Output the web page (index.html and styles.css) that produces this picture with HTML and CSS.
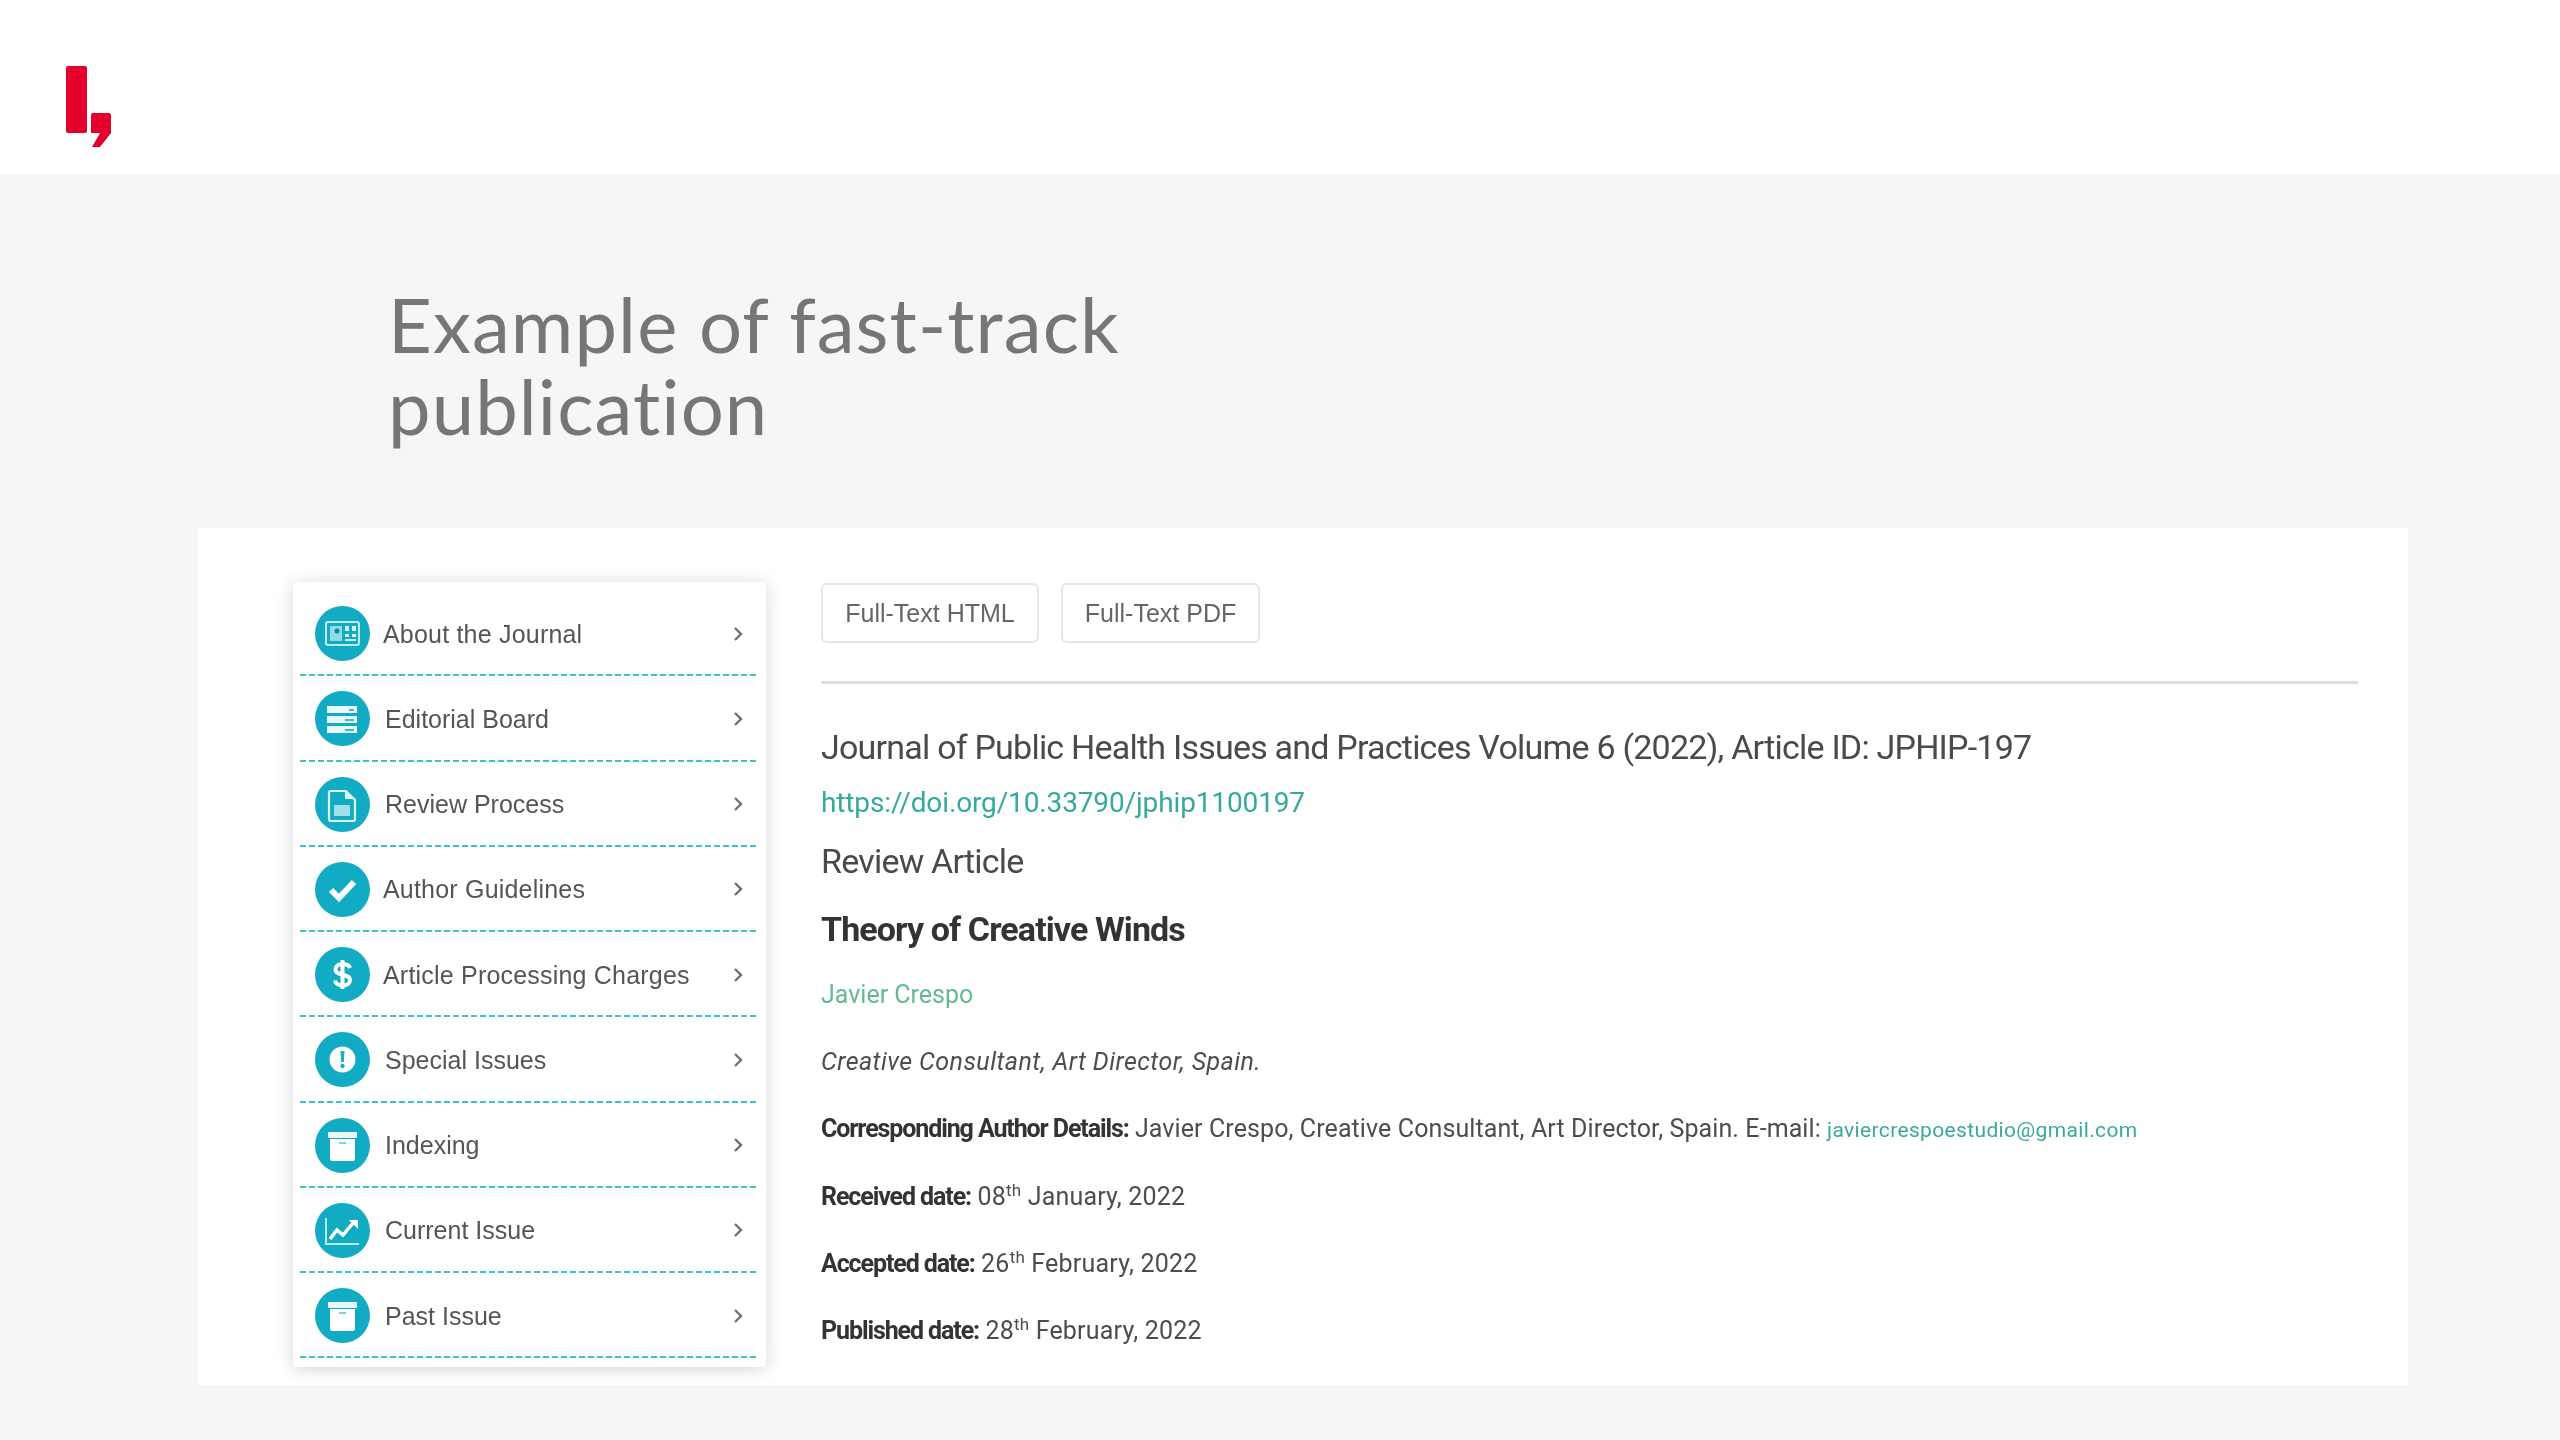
FILE: index.html
```html
<!DOCTYPE html>
<html lang="en">
<head>
<meta charset="utf-8">
<title>Example of fast-track publication</title>
<link rel="stylesheet" href="styles.css">
</head>
<body>
<header class="top">
  <svg class="logo" width="46" height="82" viewBox="0 0 46 82" aria-label="Logo">
    <rect x="0" y="0" width="21" height="67" rx="2" fill="#e4002b"/>
    <path d="M25 49q0-2 2-2h16q2 0 2 2v18L34 81h-8l8-14h-9z" fill="#e4002b"/>
  </svg>
</header>
<main class="page">
  <h1 class="title">Example of fast-track<br>publication</h1>
  <section class="card">
    <nav class="side">
      <a class="row"><span class="ico"><svg viewBox="0 0 55 55"><rect x="11" y="16" width="33" height="23" rx="2" fill="none" stroke="#bfeaf0" stroke-width="2"/><path d="M15 20h12v15H15z" fill="#8fdbe6"/><circle cx="22" cy="25" r="2.500" fill="#0c8aa0"/><path d="M30 20h4v5h-4zM37 20h4v5h-4zM30 28h4v3h-4zM37 28h4v3h-4zM30 33h11v2H30z" fill="#d6f3f7"/></svg></span><span class="lbl lbl-a">About the Journal</span><svg class="chev" viewBox="0 0 10 14"><path d="M2 1l6 6-6 6" fill="none" stroke="#707070" stroke-width="2.400"/></svg></a>
      <a class="row"><span class="ico"><svg viewBox="0 0 55 55"><path d="M12 15h30v7H12zM12 25h30v7H12zM12 35h30v7H12z" fill="#e8f8fa"/><path d="M34 18h5v2h-5zM30 28h9v2h-9zM30 38h9v2h-9z" fill="#38bccf"/></svg></span><span class="lbl">Editorial Board</span><svg class="chev" viewBox="0 0 10 14"><path d="M2 1l6 6-6 6" fill="none" stroke="#707070" stroke-width="2.400"/></svg></a>
      <a class="row"><span class="ico"><svg viewBox="0 0 55 55"><path d="M16 14h15l9 9v19a2 2 0 0 1-2 2H16a2 2 0 0 1-2-2V16a2 2 0 0 1 2-2z" fill="none" stroke="#dff6f9" stroke-width="2.200"/><path d="M30 14v8h9" fill="#dff6f9"/><path d="M19 28h16v11H19z" fill="#9fe0e9"/></svg></span><span class="lbl">Review Process</span><svg class="chev" viewBox="0 0 10 14"><path d="M2 1l6 6-6 6" fill="none" stroke="#707070" stroke-width="2.400"/></svg></a>
      <a class="row"><span class="ico"><svg viewBox="0 0 55 55"><path d="M16 28l8 8 15-16" fill="none" stroke="#fff" stroke-width="6"/></svg></span><span class="lbl lbl-a">Author Guidelines</span><svg class="chev" viewBox="0 0 10 14"><path d="M2 1l6 6-6 6" fill="none" stroke="#707070" stroke-width="2.400"/></svg></a>
      <a class="row"><span class="ico"><svg viewBox="0 0 55 55"><path d="M35 21c-1-3-4-4-7.500-4-4 0-7 2-7 5.500 0 7 14.500 3.500 14.500 10.500 0 3.500-3 5.500-7.500 5.500-4 0-7-2-7.500-5M27.500 13v29" fill="none" stroke="#fff" stroke-width="4"/></svg></span><span class="lbl lbl-a">Article Processing Charges</span><svg class="chev" viewBox="0 0 10 14"><path d="M2 1l6 6-6 6" fill="none" stroke="#707070" stroke-width="2.400"/></svg></a>
      <a class="row"><span class="ico"><svg viewBox="0 0 55 55"><circle cx="27.500" cy="27.500" r="13" fill="#fff"/><path d="M25.500 19h4l-.7 11h-2.600z" fill="#1baec4"/><circle cx="27.500" cy="34" r="2.200" fill="#1baec4"/></svg></span><span class="lbl">Special Issues</span><svg class="chev" viewBox="0 0 10 14"><path d="M2 1l6 6-6 6" fill="none" stroke="#707070" stroke-width="2.400"/></svg></a>
      <a class="row"><span class="ico"><svg viewBox="0 0 55 55"><path d="M13 14h29v6H13z" fill="#e8f8fa"/><path d="M15 21h25v20a2 2 0 0 1-2 2H17a2 2 0 0 1-2-2z" fill="#fff"/><path d="M24 24h7v2h-7z" fill="#7fd2df"/></svg></span><span class="lbl">Indexing</span><svg class="chev" viewBox="0 0 10 14"><path d="M2 1l6 6-6 6" fill="none" stroke="#707070" stroke-width="2.400"/></svg></a>
      <a class="row"><span class="ico"><svg viewBox="0 0 55 55"><path d="M11 15v26h33" fill="none" stroke="#bfeaf0" stroke-width="2"/><path d="M15 36l7-9 6 5 10-12" fill="none" stroke="#fff" stroke-width="3.500"/><path d="M34 17h9v9z" fill="#fff"/></svg></span><span class="lbl">Current Issue</span><svg class="chev" viewBox="0 0 10 14"><path d="M2 1l6 6-6 6" fill="none" stroke="#707070" stroke-width="2.400"/></svg></a>
      <a class="row"><span class="ico"><svg viewBox="0 0 55 55"><path d="M13 14h29v6H13z" fill="#e8f8fa"/><path d="M15 21h25v20a2 2 0 0 1-2 2H17a2 2 0 0 1-2-2z" fill="#fff"/><path d="M24 24h7v2h-7z" fill="#7fd2df"/></svg></span><span class="lbl">Past Issue</span><svg class="chev" viewBox="0 0 10 14"><path d="M2 1l6 6-6 6" fill="none" stroke="#707070" stroke-width="2.400"/></svg></a>
    </nav>
    <article class="article">
      <div class="btns">
        <a class="btn btn-html">Full-Text HTML</a>
        <a class="btn btn-pdf">Full-Text PDF</a>
      </div>
      <hr class="rule">
      <p class="big journal">Journal of Public Health Issues and Practices Volume 6 (2022), Article ID: JPHIP-197</p>
      <p class="doi">https://doi.org/10.33790/jphip1100197</p>
      <p class="big kind">Review Article</p>
      <p class="big name">Theory of Creative Winds</p>
      <p class="meta author">Javier Crespo</p>
      <p class="meta aff">Creative Consultant, Art Director, Spain.</p>
      <p class="meta"><b>Corresponding Author Details:</b> <span class="wide">Javier Crespo, Creative Consultant, Art Director, Spain. E-mail:</span> <span class="mail">javiercrespoestudio@gmail.com</span></p>
      <p class="meta date"><b>Received date:</b> 08<sup>th</sup> January, 2022</p>
      <p class="meta date"><b>Accepted date:</b> 26<sup>th</sup> February, 2022</p>
      <p class="meta date"><b>Published date:</b> 28<sup>th</sup> February, 2022</p>
    </article>
  </section>
</main>
</body>
</html>
```
FILE: styles.css
```css
html, body { margin: 0; padding: 0; }
body { width: 2560px; height: 1440px; overflow: hidden; background: #f7f6f5; font-family: "Liberation Sans", Arial, sans-serif; }
.top { height: 174px; background: #fff; box-sizing: border-box; padding: 66px 0 0 66px; filter: blur(.5px); }
.logo { display: block; }
.page { padding-top: 109px; filter: blur(.6px); }
.title { margin: 0 0 0 388px; font-family: Lato, sans-serif; font-weight: 400; font-size: 76px; line-height: 82px; color: #767676; height: 164px; letter-spacing: 1.1px; font-variant-ligatures: none; }
.card { margin: 81px 0 0 198px; width: 2210px; height: 857px; box-sizing: border-box; background: #fff; padding: 54px 0 0 95px; display: flex; }
.side { width: 473px; height: 785px; box-sizing: border-box; padding: 9px 9px 0 7px; background: #fff; border-radius: 4px; box-shadow: 0 2px 18px rgba(0,0,0,.17); flex: none; }
.row { display: flex; align-items: center; height: 85.25px; box-sizing: border-box; padding: 0 14px 0 15px; background: repeating-linear-gradient(90deg, #3fc1cf 0 6px, transparent 6px 9px) left bottom / 100% 2px no-repeat; }
.ico { width: 55px; height: 55px; border-radius: 50%; background: #11abc3; flex: none; display: block; }
.ico svg { display: block; width: 55px; height: 55px; }
.lbl { margin-left: 15px; flex: 1; font-size: 25px; color: #555; line-height: 40px; }
.lbl-a { margin-left: 13px; letter-spacing: .2px; }
.chev { width: 10px; height: 14px; flex: none; }
.article { margin-left: 55px; width: 1537px; flex: none; color: #555; font-family: Roboto, sans-serif; }
.btns { display: flex; gap: 22px; height: 61px; margin-top: 1px; }
.btn { box-sizing: border-box; height: 60px; border: 2px solid #e6e6e6; border-radius: 6px; display: flex; align-items: center; justify-content: center; font-family: "Liberation Sans", Arial, sans-serif; font-size: 25px; color: #666; }
.btn-html { width: 218px; }
.btn-pdf { width: 199px; }
.rule { border: 0; height: 3px; background: #dedede; margin: 37px 0 0; }
.big, .doi, .meta { margin: 0; line-height: 40px; }
.big { font-size: 34px; color: #4a4a4a; letter-spacing: -.78px; }
.journal { margin-top: 43px; }
.doi { font-size: 28px; margin-top: 16px; color: #35a99c; letter-spacing: -.13px; }
.kind { margin-top: 18px; }
.name { margin-top: 28px; font-weight: 700; color: #333; letter-spacing: -.9px; }
.meta { margin-top: 27px; font-size: 25px; color: #4d4d4d; }
.meta b { color: #333; letter-spacing: -1.1px; }
.meta sup { font-size: 17px; line-height: 0; }
.date { letter-spacing: .2px; }
.author { margin-top: 26px; color: #66b98f; }
.aff { font-style: italic; letter-spacing: .43px; }
.wide { letter-spacing: .1px; }
.mail { font-size: 21px; color: #3aa99c; letter-spacing: .35px; }
```
